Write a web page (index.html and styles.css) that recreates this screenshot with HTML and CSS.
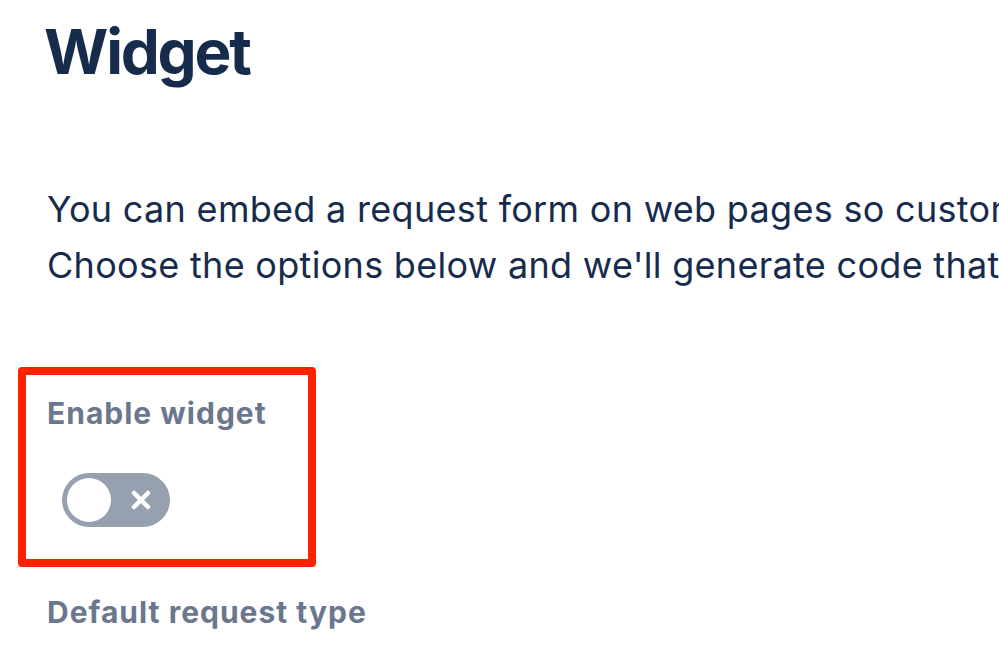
FILE: index.html
```html
<!DOCTYPE html>
<html lang="en">
<head>
<meta charset="utf-8">
<title>Widget</title>
<link rel="stylesheet" href="styles.css">
</head>
<body>
<main class="page">
  <h1 class="title">Widget</h1>
  <p class="intro">You can embed a request form on web pages so customers can raise requests.<br>Choose the options below and we'll generate code that you can copy.</p>
  <section class="highlight">
    <div class="field-label">Enable widget</div>
    <div class="toggle" role="switch" aria-checked="false">
      <span class="knob"></span>
      <svg class="toggle-x" viewBox="0 0 20 20" width="20" height="20" aria-hidden="true">
        <path d="M3 3 L17 17 M17 3 L3 17" stroke="#fff" stroke-width="4.5" stroke-linecap="round" fill="none"/>
      </svg>
    </div>
  </section>
  <div class="field-label next">Default request type</div>
</main>
</body>
</html>
```

FILE: styles.css
```css
html, body {
  margin: 0;
  padding: 0;
  background: #ffffff;
  overflow: hidden;
}
body {
  width: 999px;
  height: 647px;
  font-family: Inter, "Noto Sans", "Liberation Sans", sans-serif;
}
.page {
  padding: 0 0 0 18px;
}
.title {
  margin: 14px 0 0 26px;
  font-size: 62px;
  line-height: 75px;
  font-weight: 700;
  color: #172B4D;
  letter-spacing: -2.2px;
}
.intro {
  margin: 92px 0 0 29px;
  font-size: 36px;
  line-height: 56px;
  color: #172B4D;
  white-space: nowrap;
  font-weight: 400;
  letter-spacing: 0.3px;
}
.highlight {
  margin-top: 74px;
  border: 8px solid #FF2200;
  border-radius: 4px;
  padding: 20px 0 0 21px;
  box-sizing: border-box;
  width: 298px;
  height: 200px;
}
.field-label {
  font-size: 30px;
  line-height: 36px;
  font-weight: 700;
  color: #6B778C;
  white-space: nowrap;
  letter-spacing: 1px;
}
.field-label.next {
  margin: 27px 0 0 29px;
}
.toggle {
  margin: 42px 0 0 15px;
  width: 108px;
  height: 54px;
  border-radius: 27px;
  background: #97A0AF;
  display: flex;
  align-items: center;
  padding: 0 5px;
  box-sizing: border-box;
  gap: 20px;
}
.knob {
  width: 44px;
  height: 44px;
  border-radius: 50%;
  background: #ffffff;
  flex: none;
}
.toggle-x {
  flex: none;
}
```
